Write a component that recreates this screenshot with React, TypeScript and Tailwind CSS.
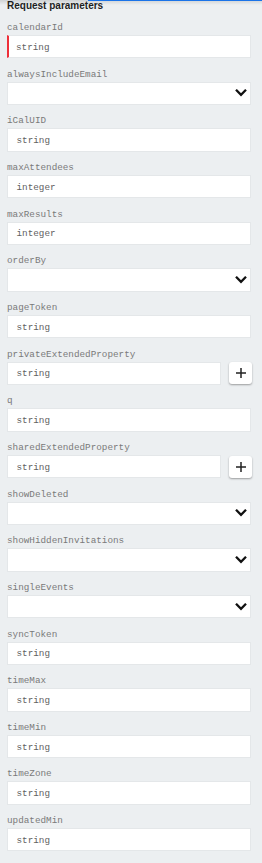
import React from "react";

type Field = { name: string; kind: "text" | "select" | "plus"; placeholder?: string; required?: boolean };

const fields: Field[] = [
  { name: "calendarId", kind: "text", placeholder: "string", required: true },
  { name: "alwaysIncludeEmail", kind: "select" },
  { name: "iCalUID", kind: "text", placeholder: "string" },
  { name: "maxAttendees", kind: "text", placeholder: "integer" },
  { name: "maxResults", kind: "text", placeholder: "integer" },
  { name: "orderBy", kind: "select" },
  { name: "pageToken", kind: "text", placeholder: "string" },
  { name: "privateExtendedProperty", kind: "plus", placeholder: "string" },
  { name: "q", kind: "text", placeholder: "string" },
  { name: "sharedExtendedProperty", kind: "plus", placeholder: "string" },
  { name: "showDeleted", kind: "select" },
  { name: "showHiddenInvitations", kind: "select" },
  { name: "singleEvents", kind: "select" },
  { name: "syncToken", kind: "text", placeholder: "string" },
  { name: "timeMax", kind: "text", placeholder: "string" },
  { name: "timeMin", kind: "text", placeholder: "string" },
  { name: "timeZone", kind: "text", placeholder: "string" },
  { name: "updatedMin", kind: "text", placeholder: "string" },
];

const mono = "font-['Liberation_Mono','DejaVu_Sans_Mono',monospace]";

function Chevron() {
  return (
    <svg width="12" height="8" viewBox="0 0 12 8" className="shrink-0">
      <polyline points="1.8,1.6 6,5.8 10.2,1.6" fill="none" stroke="#111" strokeWidth="2.3" strokeLinecap="square" />
    </svg>
  );
}

function Plus() {
  return (
    <svg width="12" height="12" viewBox="0 0 12 12">
      <path d="M6 1v10M1 6h10" stroke="#222" strokeWidth="1.5" />
    </svg>
  );
}

function Box({ f }: { f: Field }) {
  const base = "h-[23.33px] bg-white border border-[#e4e7e9] flex items-center";
  if (f.kind === "select") {
    return (
      <div className={`${base} justify-end pr-[3px]`}>
        <Chevron />
      </div>
    );
  }
  const input = (
    <div
      className={`${base} pt-[2px] flex-1 min-w-0 ${f.required ? "border-l-[2px] border-l-[#ee2f3a] pl-[7px]" : "pl-[8.5px]"}`}
    >
      <span className={`${mono} text-[9.3px] text-[#616161]`}>{f.placeholder}</span>
    </div>
  );
  if (f.kind === "plus") {
    return (
      <div className="flex items-center gap-[8px]">
        {input}
        <div className="w-[23px] h-[22px] bg-white rounded-[3px] shadow-[0_1px_2px_rgba(0,0,0,0.35)] flex items-center justify-center shrink-0 mr-[-1px]">
          <Plus />
        </div>
      </div>
    );
  }
  return <div className="flex">{input}</div>;
}

export default function App() {
  return (
    <div className="w-[262px] h-[863px] bg-[#eceff1] relative overflow-hidden">
      <div className="absolute top-0 left-0 right-0 h-[5px] bg-gradient-to-b from-[rgba(0,0,0,0.12)] to-transparent pointer-events-none" />
      <div className="absolute top-0 left-[88px] right-0 h-[1px] bg-[#1a73e8]" />
      <div className="pl-[7px] pr-[11px]">
        <div className="h-[11.67px] font-['Liberation_Sans',Arial,sans-serif] font-bold text-[10px] leading-[11.67px] text-[#1f1f1f]">
          Request parameters
        </div>
        {fields.map((f) => (
          <div key={f.name} className="flex flex-col">
            <div className={`h-[23.33px] flex items-end pb-[1px] ${mono} text-[9.3px] leading-[12px] text-[#7a7a7a]`}>
              {f.name}
            </div>
            <Box f={f} />
          </div>
        ))}
      </div>
    </div>
  );
}
